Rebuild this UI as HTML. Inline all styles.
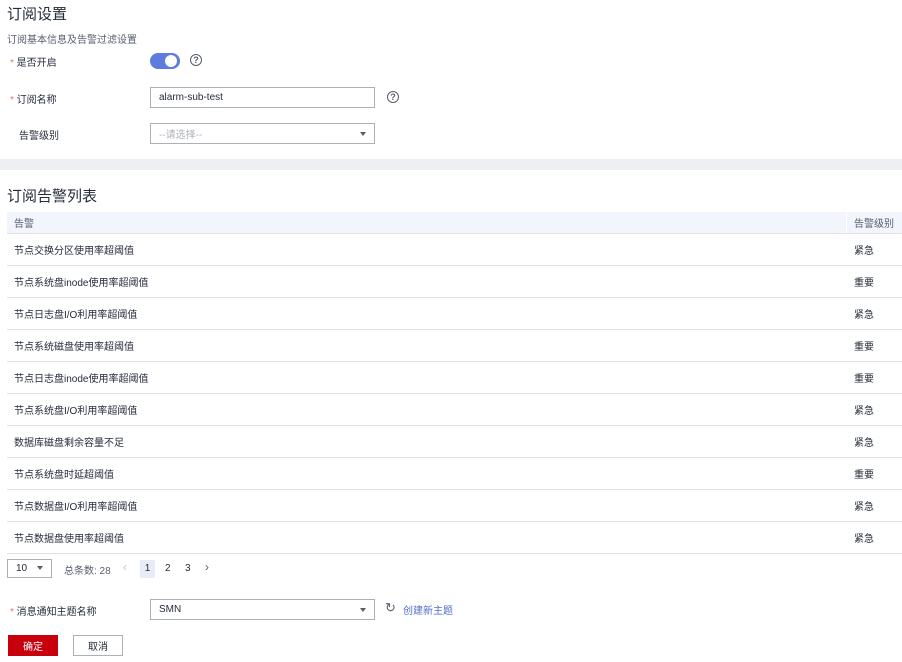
<!DOCTYPE html>
<html><head><meta charset="utf-8"><style>
*{box-sizing:border-box;margin:0;padding:0}
body{width:902px;height:662px;background:#fff;font-family:"Liberation Sans","Noto Sans CJK SC",sans-serif;color:#252b3a;font-size:10px;position:relative;overflow:hidden}
.a{position:absolute;white-space:nowrap}
.star{color:#f66f6a}
.inp{position:absolute;border:1px solid #adb0b8;background:#fff;height:21px;font-size:10px;display:flex;align-items:center;padding-left:8px}
.q{position:absolute;width:12px;height:12px;border:1.2px solid #575d6c;border-radius:50%;font-size:9px;line-height:10px;text-align:center;color:#575d6c;font-weight:bold}
.caret{position:absolute;right:8px;top:8px;width:0;height:0;border-left:3.5px solid transparent;border-right:3.5px solid transparent;border-top:4px solid #575d6c}
.row{position:absolute;left:7px;width:895px;height:32px;border-bottom:1px solid #dfe1e6}
.row span,.row b{position:absolute;top:0;height:31px;display:flex;align-items:center;font-weight:normal}
.row span{left:7px}
.row b{left:847px}
</style></head><body>
<div class="a" style="left:7px;top:3px;font-size:15px;color:#252b3a">订阅设置</div>
<div class="a" style="left:7px;top:31px;color:#575d6c;font-size:10px">订阅基本信息及告警过滤设置</div>
<div class="a" style="left:10px;top:54px"><span class="star">* </span>是否开启</div>
<div class="a" style="left:150px;top:53px;width:30px;height:16px;border-radius:8px;background:#5e7ce0"></div>
<div class="a" style="left:165px;top:55px;width:12px;height:12px;border-radius:50%;background:#fff"></div>
<div class="q" style="left:190px;top:54px">?</div>
<div class="a" style="left:10px;top:91px"><span class="star">* </span>订阅名称</div>
<div class="inp" style="left:150px;top:87px;width:225px;color:#252b3a">alarm-sub-test</div>
<div class="q" style="left:387px;top:91px">?</div>
<div class="a" style="left:19px;top:127px">告警级别</div>
<div class="inp" style="left:150px;top:123px;width:225px;color:#adb0b8">--请选择--<div class="caret"></div></div>
<div class="a" style="left:0;top:159px;width:902px;height:11px;background:#eeeff3"></div>
<div class="a" style="left:7px;top:185px;font-size:15px">订阅告警列表</div>
<div class="a" style="left:7px;top:212px;width:895px;height:22px;background:#f2f5fc;border-bottom:1px solid #dfe1e6;color:#575d6c">
<span style="position:absolute;left:7px;top:0;height:21px;display:flex;align-items:center">告警</span>
<span style="position:absolute;left:839px;top:0;height:21px;border-left:1px solid #fff"></span>
<span style="position:absolute;left:847px;top:0;height:21px;display:flex;align-items:center">告警级别</span></div>
<div class="row" style="top:234px"><span>节点交换分区使用率超阈值</span><b>紧急</b></div>
<div class="row" style="top:266px"><span>节点系统盘inode使用率超阈值</span><b>重要</b></div>
<div class="row" style="top:298px"><span>节点日志盘I/O利用率超阈值</span><b>紧急</b></div>
<div class="row" style="top:330px"><span>节点系统磁盘使用率超阈值</span><b>重要</b></div>
<div class="row" style="top:362px"><span>节点日志盘inode使用率超阈值</span><b>重要</b></div>
<div class="row" style="top:394px"><span>节点系统盘I/O利用率超阈值</span><b>紧急</b></div>
<div class="row" style="top:426px"><span>数据库磁盘剩余容量不足</span><b>紧急</b></div>
<div class="row" style="top:458px"><span>节点系统盘时延超阈值</span><b>重要</b></div>
<div class="row" style="top:490px"><span>节点数据盘I/O利用率超阈值</span><b>紧急</b></div>
<div class="row" style="top:522px"><span>节点数据盘使用率超阈值</span><b>紧急</b></div>
<div class="inp" style="left:7px;top:559px;width:45px;height:19px">10<div class="caret" style="top:6px"></div></div>
<div class="a" style="left:64px;top:562px;color:#575d6c">总条数: 28</div>
<div class="a" style="left:123px;top:560px;color:#c0c4cc;font-size:12px">‹</div>
<div class="a" style="left:140px;top:560px;width:15px;height:18px;background:#e8ecf6;text-align:center;line-height:18px">1</div>
<div class="a" style="left:165px;top:563px">2</div>
<div class="a" style="left:185px;top:563px">3</div>
<div class="a" style="left:205px;top:560px;font-size:12px;color:#575d6c">›</div>
<div class="a" style="left:10px;top:603px"><span class="star">* </span>消息通知主题名称</div>
<div class="inp" style="left:150px;top:599px;width:225px">SMN<div class="caret"></div></div>
<div class="a" style="left:385px;top:600px;font-size:13px;color:#575d6c">↻</div>
<div class="a" style="left:403px;top:602px;color:#526ecc">创建新主题</div>
<div class="a" style="left:8px;top:635px;width:50px;height:21px;background:#c7000b;color:#fff;display:flex;align-items:center;justify-content:center">确定</div>
<div class="a" style="left:73px;top:635px;width:50px;height:21px;border:1px solid #adb0b8;display:flex;align-items:center;justify-content:center">取消</div>
</body></html>
